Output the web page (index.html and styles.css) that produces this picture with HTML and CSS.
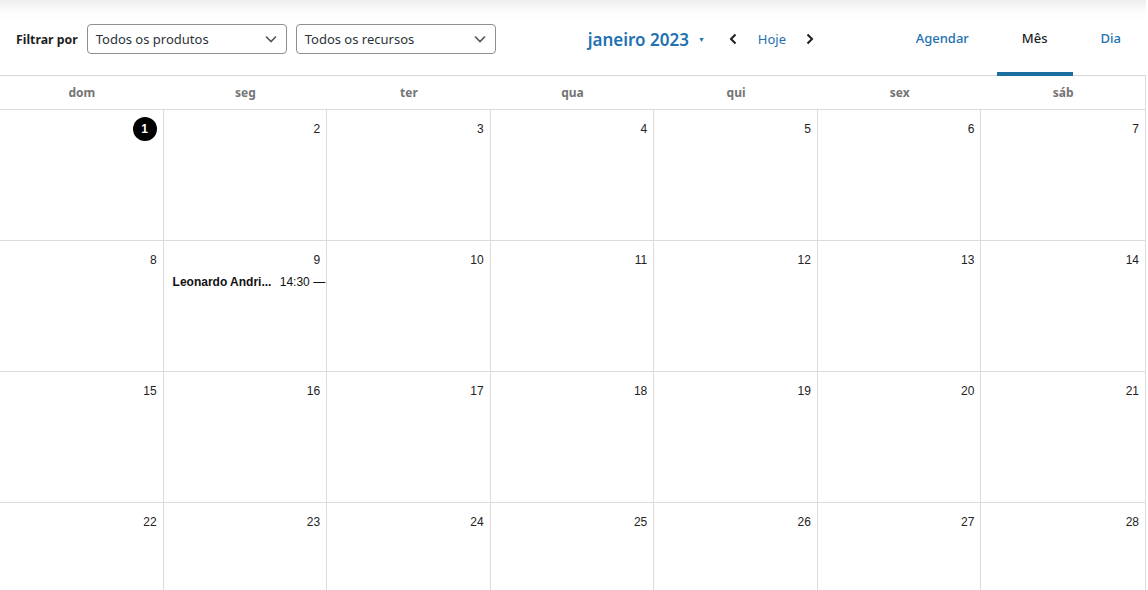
FILE: index.html
```html
<!DOCTYPE html>
<html lang="pt-BR">
<head>
<meta charset="utf-8">
<title>Calendário</title>
<link rel="stylesheet" href="styles.css">
</head>
<body>
<div class="app">
  <header class="toolbar">
    <div class="filters">
      <span class="filter-label">Filtrar por</span>
      <div class="select">
        <span>Todos os produtos</span>
        <svg class="chev" width="12" height="8" viewBox="0 0 12 8"><path d="M1 1.5 L6 6.5 L11 1.5" fill="none" stroke="#50575e" stroke-width="1.6"/></svg>
      </div>
      <div class="select">
        <span>Todos os recursos</span>
        <svg class="chev" width="12" height="8" viewBox="0 0 12 8"><path d="M1 1.5 L6 6.5 L11 1.5" fill="none" stroke="#50575e" stroke-width="1.6"/></svg>
      </div>
    </div>
    <div class="nav">
      <span class="month">janeiro 2023</span>
      <span class="caret">▼</span>
      <svg class="arrow" width="9" height="12" viewBox="0 0 9 12"><path d="M6.5 1.5 L2 6 L6.5 10.5" fill="none" stroke="#1e1e1e" stroke-width="2"/></svg>
      <span class="today">Hoje</span>
      <svg class="arrow" width="9" height="12" viewBox="0 0 9 12"><path d="M2.5 1.5 L7 6 L2.5 10.5" fill="none" stroke="#1e1e1e" stroke-width="2"/></svg>
    </div>
    <nav class="tabs">
      <span class="tab">Agendar</span>
      <span class="tab active">Mês</span>
      <span class="tab">Dia</span>
    </nav>
  </header>
  <div class="calendar">
    <div class="weekdays">
      <div class="wd">dom</div><div class="wd">seg</div><div class="wd">ter</div><div class="wd">qua</div><div class="wd">qui</div><div class="wd">sex</div><div class="wd">sáb</div>
    </div>
    <div class="week">
      <div class="day"><span class="num today-num">1</span></div>
      <div class="day"><span class="num">2</span></div>
      <div class="day"><span class="num">3</span></div>
      <div class="day"><span class="num">4</span></div>
      <div class="day"><span class="num">5</span></div>
      <div class="day"><span class="num">6</span></div>
      <div class="day"><span class="num">7</span></div>
    </div>
    <div class="week">
      <div class="day"><span class="num">8</span></div>
      <div class="day"><span class="num">9</span>
        <div class="event"><span class="ev-title">Leonardo Andri...</span><span class="ev-time">14:30 —</span></div>
      </div>
      <div class="day"><span class="num">10</span></div>
      <div class="day"><span class="num">11</span></div>
      <div class="day"><span class="num">12</span></div>
      <div class="day"><span class="num">13</span></div>
      <div class="day"><span class="num">14</span></div>
    </div>
    <div class="week">
      <div class="day"><span class="num">15</span></div>
      <div class="day"><span class="num">16</span></div>
      <div class="day"><span class="num">17</span></div>
      <div class="day"><span class="num">18</span></div>
      <div class="day"><span class="num">19</span></div>
      <div class="day"><span class="num">20</span></div>
      <div class="day"><span class="num">21</span></div>
    </div>
    <div class="week last">
      <div class="day"><span class="num">22</span></div>
      <div class="day"><span class="num">23</span></div>
      <div class="day"><span class="num">24</span></div>
      <div class="day"><span class="num">25</span></div>
      <div class="day"><span class="num">26</span></div>
      <div class="day"><span class="num">27</span></div>
      <div class="day"><span class="num">28</span></div>
    </div>
  </div>
</div>
</body>
</html>
```

FILE: styles.css
```css
* { box-sizing: border-box; }
html, body { margin: 0; padding: 0; background: #fff; }
body { font-family: "Noto Sans", "Open Sans", sans-serif; color: #1e1e1e; overflow: hidden; height: 590px; }

.app { width: 1146px; }

.toolbar {
  height: 76px;
  display: flex;
  align-items: stretch;
  padding-left: 16px;
  border-bottom: 1px solid #d6d6d6;
  background: linear-gradient(#efefef 0px, #fafafa 10px, #ffffff 20px);
}

.filters { display: flex; align-items: center; gap: 9px; padding-top: 3px; }
.filter-label { font-size: 12.3px; font-weight: 700; color: #1e1e1e; }
.select {
  width: 200px;
  height: 30px;
  border: 1px solid #8c8f94;
  border-radius: 4px;
  background: #fff;
  display: flex;
  align-items: center;
  justify-content: space-between;
  padding: 0 9px 0 8px;
  font-size: 13px;
  color: #2c3338;
}

.nav { display: flex; align-items: center; margin-left: 92px; padding-top: 3px; }
.month { font-size: 17px; font-weight: 600; color: #2271b1; }
.caret { font-size: 7px; color: #2271b1; margin-left: 9px; margin-right: 24px; }
.today { font-size: 13px; color: #2271b1; margin: 0 19px 0 20px; }
.arrow { display: block; }

.tabs { display: flex; margin-left: auto; gap: 3px; }
.tab {
  display: flex;
  align-items: center;
  padding: 3px 25px 0;
  font-size: 13px;
  font-weight: 500;
  color: #2271b1;
  border-bottom: 4px solid transparent;
  margin-bottom: -1px;
}
.tab.active { color: #1e1e1e; border-bottom-color: #1b6f9e; }

.calendar { border-right: 1px solid #dcdcdc; }
.weekdays, .week { display: grid; grid-template-columns: repeat(7, 1fr); }
.weekdays { height: 34px; border-bottom: 1px solid #dcdcdc; }
.wd {
  display: flex; align-items: center; justify-content: center;
  font-size: 12px; font-weight: 700; color: #757575;
  padding-bottom: 1px;
}
.week { height: 131px; border-bottom: 1px solid #dcdcdc; }
.week.last { height: 88px; border-bottom: none; }
.day {
  border-right: 1px solid #dcdcdc;
  padding: 10px 6px 0 9px;
  display: flex; flex-direction: column; align-items: flex-end;
  overflow: hidden;
  font-family: "Liberation Sans", Arial, sans-serif;
}
.day:last-child { border-right: none; }
.num { font-size: 12px; line-height: 18px; color: #222; }
.today-num {
  width: 24px; height: 24px; margin-top: -3px; margin-bottom: -3px;
  border-radius: 50%; background: #000; color: #fff;
  display: flex; align-items: center; justify-content: center;
  font-weight: 700;
}
.event {
  align-self: stretch;
  display: flex; gap: 8px; justify-content: space-between;
  margin-top: 4px; margin-right: -5px;
  white-space: nowrap;
  font-size: 12px; line-height: 18px; color: #111;
}
.ev-title { font-weight: 700; }
```
